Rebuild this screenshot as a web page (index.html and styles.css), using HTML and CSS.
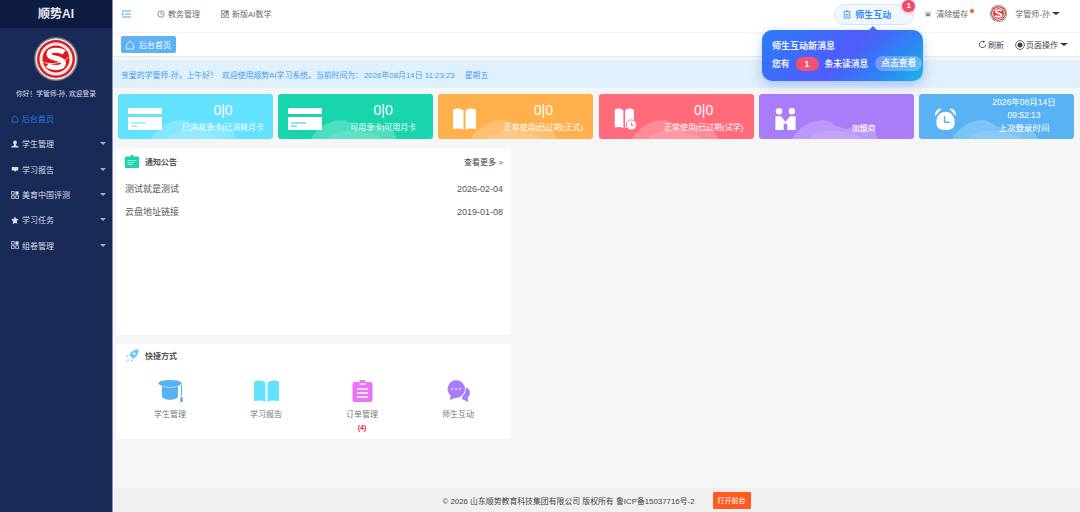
FILE: index.html
```html
<!DOCTYPE html>
<html>
<head>
    <title>顺势AI</title>
    <link rel="stylesheet" href="styles.css">
</head>
<body>

<svg class="defs" width="0" height="0">
  <symbol id="i-card" viewBox="0 0 34 22">
    <rect x="0" y="0" width="34" height="6" rx="1" fill="#fff"/>
    <path d="M0 9h34v12a1 1 0 0 1-1 1H1a1 1 0 0 1-1-1z" fill="#fff"/>
  </symbol>
  <symbol id="i-book" viewBox="0 0 24 24" preserveAspectRatio="none">
    <path d="M0 2c4-2 8-2 11 1v21c-3-2-7-2-10-1a1 1 0 0 1-1-1zM24 2c-4-2-8-2-11 1v21c3-2 7-2 10-1a1 1 0 0 0 1-1z" fill="currentColor"/>
  </symbol>
  <symbol id="i-cloud" viewBox="0 0 90 20">
    <path d="M0 20C4 12 12 6 20 3c8-3 15-3 21 2 4 3 9 4 15 5 6-4 14-5 20-2 6 3 8 7 10 12z" fill="#fff" fill-opacity=".22"/>
    <path d="M16 20c6-7 16-9 26-8 8 1 20 2 30 8z" fill="#fff" fill-opacity=".12"/>
  </symbol>
  <symbol id="i-grid" viewBox="0 0 10 10">
    <path d="M.5.5h3.600v3.600H.5zM.5 5.900h3.600v3.600H.5zM5.900 5.900h3.600v3.600H5.900z" fill="none" stroke="currentColor"/>
    <rect x="5.500" y=".5" width="4" height="4" fill="currentColor"/>
  </symbol>
  <symbol id="i-logo" viewBox="0 0 44 44">
    <circle cx="22" cy="22" r="22" fill="#6f7a8e"/>
    <circle cx="22" cy="22" r="20.500" fill="#f4f1ec"/>
    <circle cx="22" cy="22" r="19" fill="#dc1f24"/>
    <circle cx="22" cy="22" r="16.500" fill="#f8ece6"/>
    <circle cx="22" cy="22" r="13.500" fill="#dc1a20"/>
    <path d="M9 25c6 3 20 2 27-6" fill="none" stroke="#f8ece6" stroke-width=".8"/>
    <path d="M30 15.500C27 13 15.500 11.500 15 17c-.5 5 15 3.500 14.500 9.500C29 32 17 31 13.500 28" fill="none" stroke="#fff" stroke-width="5"/>
  </symbol>
</svg>

<div class="layout">
  <aside class="sidebar">
    <div class="brand">顺势AI</div>
    <div class="profile">
      <svg class="profile-logo"><use href="#i-logo"/></svg>
      <p class="hello">你好！学管师-孙, 欢迎登录</p>
    </div>
    <ul class="menu">
      <li class="menu-item active">
        <svg class="menu-icon" viewBox="0 0 10 10"><path d="M1.500 4.500L5 1l3.500 3.500v4.500h-7z" fill="none" stroke="currentColor"/></svg>
        <span>后台首页</span>
      </li>
      <li class="menu-item">
        <svg class="menu-icon" viewBox="0 0 10 10"><circle cx="5" cy="3" r="2.300" fill="currentColor"/><path d="M4 5h2l.5 2 3 1v1.500H.5V8l3-1z" fill="currentColor"/></svg>
        <span>学生管理</span><i class="caret"></i>
      </li>
      <li class="menu-item">
        <svg class="menu-icon" viewBox="0 0 10 10"><path d="M1 2.500h8v4.500H6.500L5 8.500 3.500 7H1z" fill="currentColor"/></svg>
        <span>学习报告</span><i class="caret"></i>
      </li>
      <li class="menu-item">
        <svg class="menu-icon"><use href="#i-grid"/></svg>
        <span>美育中国评测</span><i class="caret"></i>
      </li>
      <li class="menu-item">
        <svg class="menu-icon" viewBox="0 0 10 10"><path d="M5 .6l1.400 2.900 3.200.4-2.300 2.200.6 3.200L5 8.800l-2.900 1.500.6-3.200L.4 3.900l3.200-.4z" fill="currentColor"/></svg>
        <span>学习任务</span><i class="caret"></i>
      </li>
      <li class="menu-item">
        <svg class="menu-icon"><use href="#i-grid"/></svg>
        <span>组卷管理</span><i class="caret"></i>
      </li>
    </ul>
  </aside>

  <div class="main">
    <header class="topbar">
      <svg class="hamburger" viewBox="0 0 10 8"><path d="M0 .6h10M3.500 4h6.500M0 7.400h10" stroke="#4da3f5" stroke-width="1.200" fill="none"/><path d="M0 2.300L2.300 4 0 5.700z" fill="#4da3f5"/></svg>
      <a class="top-link top-link-first">
        <svg class="top-icon" viewBox="0 0 10 10"><circle cx="5" cy="5" r="4" fill="none" stroke="currentColor"/><path d="M5 2.500V5l1.800 1" fill="none" stroke="currentColor"/></svg>
        教务管理
      </a>
      <a class="top-link">
        <svg class="top-icon"><use href="#i-grid"/></svg>
        新版AI数学
      </a>
      <div class="top-right">
        <div class="chat-pill">
          <svg class="pill-icon" viewBox="0 0 10 10"><path d="M1.500 1.500h7v8h-7zM3.500 1V.5h3V1M3 5h4M3 7h4" fill="none" stroke="currentColor"/></svg>
          师生互动
          <span class="pill-badge">1</span>
        </div>
        <a class="top-link clear-cache">
          <svg class="trash" viewBox="0 0 8 8"><path d="M0 2h8v1H0zM1 3.500h6V7H1z" fill="currentColor"/></svg>
          清除缓存<i class="dot"></i>
        </a>
        <svg class="avatar"><use href="#i-logo"/></svg>
        <a class="top-link user">学管师-孙<i class="caret dark"></i></a>
      </div>
    </header>

    <div class="tabbar">
      <div class="tab-home">
        <svg class="tab-home-icon" viewBox="0 0 10 10"><path d="M1.500 4.500L5 1l3.500 3.500v4.500h-7z" fill="none" stroke="currentColor" stroke-width=".8"/></svg>
        后台首页
      </div>
      <div class="tab-actions">
        <span class="tab-action">
          <svg class="tab-icon" viewBox="0 0 10 10"><path d="M8.500 5A3.500 3.500 0 1 1 6.800 2" fill="none" stroke="currentColor"/><path d="M6 .5l2 1.700-2.300.8z" fill="currentColor"/></svg>
          刷新
        </span>
        <span class="tab-action">
          <svg class="tab-icon wide" viewBox="0 0 10 10"><circle cx="5" cy="5" r="4.400" fill="none" stroke="currentColor" stroke-width=".8"/><circle cx="5" cy="5" r="2.500" fill="currentColor"/></svg>
          页面操作<i class="caret dark"></i>
        </span>
      </div>
    </div>

    <div class="welcome">
      <span>亲爱的学管师-孙，上午好！</span>
      <span>欢迎使用顺势AI学习系统。当前时间为：</span>
      <span>2026年08月14日 11:23:23</span>
      <span>星期五</span>
    </div>

    <section class="stats">
      <div class="stat stat-sky">
        <svg class="stat-icon"><use href="#i-card"/><path d="M3 15h15M3 18h6" stroke="#62e2ff"/></svg>
        <svg class="cloud"><use href="#i-cloud"/></svg>
        <div class="stat-text"><b>0|0</b><span>已消耗季卡|已消耗月卡</span></div>
      </div>
      <div class="stat stat-green">
        <svg class="stat-icon"><use href="#i-card"/><path d="M3 15h15M3 18h6" stroke="#19d5ae"/></svg>
        <svg class="cloud"><use href="#i-cloud"/></svg>
        <div class="stat-text"><b>0|0</b><span>可用季卡|可用月卡</span></div>
      </div>
      <div class="stat stat-orange">
        <svg class="stat-icon book"><use href="#i-book"/></svg>
        <svg class="cloud"><use href="#i-cloud"/></svg>
        <div class="stat-text"><b>0|0</b><span>正常使用|已过期(正式)</span></div>
      </div>
      <div class="stat stat-red">
        <svg class="stat-icon book" viewBox="0 0 26 26">
          <use href="#i-book" width="23" height="24"/>
          <circle cx="20" cy="20" r="6" fill="#fff" stroke="#ff6b7a" stroke-width="1"/>
          <path d="M20 17v3.500h3" fill="none" stroke="#ff6b7a" stroke-width="1.200"/>
        </svg>
        <svg class="cloud"><use href="#i-cloud"/></svg>
        <div class="stat-text"><b>0|0</b><span>正常使用|已过期(试学)</span></div>
      </div>
      <div class="stat stat-purple">
        <svg class="stat-icon book" viewBox="0 0 24 24">
          <circle cx="5" cy="3.500" r="3.500" fill="#fff"/><circle cx="19" cy="3.500" r="3.500" fill="#fff"/>
          <path d="M1 9h6l5 6 5-6h6v15h-9v-6l-2-1.500L10 18v6H1z" fill="#fff"/>
        </svg>
        <svg class="cloud"><use href="#i-cloud"/></svg>
        <div class="stat-text stat-text-low"><span>加盟商</span></div>
      </div>
      <div class="stat stat-blue">
        <svg class="stat-icon book" viewBox="0 0 24 24">
          <path d="M1 8C1 4 3 1 7 1L1 8zM23 8c0-4-2-7-6-7l6 7z" fill="#fff" stroke="#fff"/>
          <path d="M12 4c6 0 10 5 10 11 0 7-3 9-10 9S2 22 2 15C2 9 6 4 12 4z" fill="#fff"/>
          <path d="M11 9v6.500h5.500" fill="none" stroke="#58b2f4" stroke-width="1.600"/>
        </svg>
        <svg class="cloud"><use href="#i-cloud"/></svg>
        <div class="stat-text stat-text-time"><span>2026年08月14日</span><span>09:52:13</span><span>上次登录时间</span></div>
      </div>
    </section>

    <div class="panels">
      <section class="panel panel-notice">
        <div class="panel-head">
          <svg class="panel-icon" viewBox="0 0 14 14"><path d="M7 0l2 3H5z" fill="#19d5ae"/><rect y="2.500" width="14" height="11.500" rx="1" fill="#19d5ae"/><path d="M2.500 6.500h9M2.500 8.500h7M2.500 10.500h5" stroke="#c8f5ea" stroke-width=".8"/></svg>
          <h3 class="panel-title">通知公告</h3>
          <a class="more">查看更多 &gt;</a>
        </div>
        <ul class="notices">
          <li><span>测试就是测试</span><span>2026-02-04</span></li>
          <li><span>云盘地址链接</span><span>2019-01-08</span></li>
        </ul>
      </section>

      <section class="panel panel-quick">
        <div class="panel-head panel-head-quick">
          <svg class="panel-icon" viewBox="0 0 15 15"><path d="M14.500.5c-5 0-8 2-10 6l4 4c4-2 6-5 6-10z" fill="#6cc4fb"/><path d="M4 6L1 7l2 2zM9 11l-1 3-2-2z" fill="#9adbff"/><path d="M3 10l2 2-4 3z" fill="#b7e6ff"/><circle cx="10" cy="5" r="1.300" fill="#fff"/></svg>
          <h3 class="panel-title">快捷方式</h3>
        </div>
        <div class="shortcuts">
          <a class="shortcut">
            <svg class="shortcut-icon" viewBox="0 0 25 22"><path d="M12 0c6 0 11 1 12 3.500C22 6 17 7 12 7S2 6 0 3.500C1 1 6 0 12 0z" fill="#58b2f4"/><path d="M4 6c4 2 12 2 16 0v10c0 5-16 5-16 0z" fill="#58b2f4"/><path d="M23.500 5v11" stroke="#58b2f4"/><path d="M22.500 17h2l.5 4.500c-1 1-2 1-3 0z" fill="#58b2f4"/></svg>
            <span>学生管理</span>
          </a>
          <a class="shortcut">
            <svg class="shortcut-icon book-sky"><use href="#i-book"/></svg>
            <span>学习报告</span>
          </a>
          <a class="shortcut">
            <svg class="shortcut-icon" viewBox="0 0 20 22"><path d="M2 2h5a3 3 0 0 1 6 0h5a2 2 0 0 1 2 2v16a2 2 0 0 1-2 2H2a2 2 0 0 1-2-2V4a2 2 0 0 1 2-2z" fill="#ea74f7"/><path d="M4.500 9h11M4.500 13h11M4.500 17h11" stroke="#fff" stroke-width="1.400"/><path d="M7 3h6v2H7z" fill="#fff" fill-opacity=".7"/></svg>
            <span>订单管理</span>
            <em class="count">(4)</em>
          </a>
          <a class="shortcut">
            <svg class="shortcut-icon" viewBox="0 0 23 22"><path d="M16 7c5 0 7 3 7 6 0 2-1 3-2 4l0 5-6-3z" fill="#a97cf8"/><circle cx="9" cy="9" r="9.800" fill="#fff"/><path d="M9 0a9 9 0 0 1 0 18l-1 0-5 2 .5-4.500A9 9 0 0 1 9 0z" fill="#a97cf8"/><path d="M4.500 9H6M8.300 9h1.500M12 9h1.500" stroke="#fff" stroke-width="1.500"/></svg>
            <span>师生互动</span>
          </a>
        </div>
      </section>
    </div>

    <footer class="footer">
      <span>© 2026 山东顺势教育科技集团有限公司 版权所有 鲁ICP备15037716号-2</span>
      <a class="open-front">打开前台</a>
    </footer>

    <div class="popover">
      <h4 class="popover-title">师生互动新消息</h4>
      <div class="popover-row">
        <span>您有</span>
        <b class="popover-count">1</b>
        <span>条未读消息</span>
        <a class="popover-btn">点击查看</a>
      </div>
    </div>
  </div>
</div>

</body>
</html>
```

FILE: styles.css
```css
* {
    box-sizing: border-box;
}

html, body {
    height: 100%;
}

body {
    margin: 0;
    overflow: hidden;
    background-color: #f6f6f6;
    font-family: "Liberation Sans", "Noto Sans CJK SC", sans-serif;
    font-size: 8px;
    color: #666;
}

ul {
    margin: 0;
    padding: 0;
    list-style: none;
}

.defs {
    position: absolute;
}

.layout {
    display: flex;
    height: 512px;
}

/* Sidebar */
.sidebar {
    width: 113px;
    flex-shrink: 0;
    background-color: #1a2a56;
    border-right: 1px solid #8c93b4;
    color: #d9dde8;
}

.brand {
    height: 28px;
    line-height: 28px;
    text-align: center;
    background-color: #0f1c42;
    color: #e6e9f0;
    font-size: 12px;
    font-weight: bold;
}

.profile {
    padding-top: 9px;
    text-align: center;
}

.profile-logo {
    display: block;
    width: 44px;
    height: 44px;
    margin: 0 auto;
}

.hello {
    margin: 7px 0 0;
    font-size: 6.750px;
    line-height: 11px;
}

.menu {
    margin-top: 7px;
}

.menu-item {
    display: flex;
    align-items: center;
    height: 25.300px;
    padding: 0 6px 0 11px;
}

.menu-item.active {
    color: #1f7fe8;
}

.menu-icon {
    width: 8px;
    height: 8px;
    margin-right: 3px;
    flex-shrink: 0;
}

.caret {
    width: 0;
    height: 0;
    margin-left: auto;
    border: 3px solid transparent;
    border-top: 3px solid #a9afc2;
    border-bottom: 0;
}

.caret.dark {
    margin-left: 2px;
    border-width: 3px 4px 0;
    border-top-color: #333;
}

/* Main column */
.main {
    position: relative;
    flex: 1;
    min-width: 0;
    display: flex;
    flex-direction: column;
}

.topbar {
    display: flex;
    align-items: center;
    height: 33px;
    padding: 0 20px 5px 9px;
    background-color: #fff;
    border-bottom: 1px solid #f5f5f5;
}

.hamburger {
    width: 9px;
    height: 8px;
}

.top-link {
    display: flex;
    align-items: center;
    margin-left: 21px;
    color: #6b6b6b;
    white-space: nowrap;
}

.top-link-first {
    margin-left: 26px;
}

.top-icon {
    width: 8px;
    height: 8px;
    margin-right: 3px;
    color: #777;
}

.top-right {
    display: flex;
    align-items: center;
    margin-left: auto;
}

.chat-pill {
    position: relative;
    display: flex;
    align-items: center;
    width: 80px;
    height: 21px;
    margin-top: 1px;
    padding-left: 8px;
    border: 1px solid #d6e8fa;
    border-radius: 11px;
    background-color: #f0f7fe;
    color: #2f8fef;
    font-size: 9px;
    font-weight: bold;
}

.pill-icon {
    width: 8px;
    height: 9px;
    margin-right: 4px;
}

.pill-badge {
    position: absolute;
    top: -5px;
    right: -2px;
    width: 13px;
    height: 12px;
    line-height: 12px;
    border-radius: 6px;
    background-color: #f6486c;
    color: #fff;
    font-size: 8px;
    text-align: center;
    box-shadow: 0 1px 3px rgba(246, 72, 108, .5);
}

.clear-cache {
    margin-left: 11px;
}

.trash {
    width: 6px;
    height: 6px;
    margin-right: 5px;
    color: #888;
}

.dot {
    width: 4px;
    height: 4px;
    margin: -6px 0 0 2px;
    border-radius: 50%;
    background-color: #ff5a1f;
}

.avatar {
    width: 17px;
    height: 17px;
    margin-left: 16px;
}

.user {
    margin-left: 8px;
}

.tabbar {
    display: flex;
    align-items: center;
    justify-content: space-between;
    height: 24px;
    padding: 0 12px 0 8px;
    background-color: #fff;
    border-bottom: 1px solid #e8e8e8;
}

.tab-home {
    display: flex;
    align-items: center;
    width: 55px;
    height: 17px;
    padding-left: 4px;
    border-radius: 2px;
    background-color: #5cb2f5;
    color: #fff;
}

.tab-home-icon {
    width: 10px;
    height: 10px;
    margin-right: 4px;
}

.tab-actions {
    display: flex;
    align-items: center;
    gap: 11px;
}

.tab-action {
    display: flex;
    align-items: center;
    color: #444;
}

.tab-icon {
    width: 9px;
    height: 9px;
    margin-right: 1px;
}

.tab-icon.wide {
    width: 10px;
    height: 10px;
}

.welcome {
    display: flex;
    align-items: center;
    height: 28px;
    margin-top: 3px;
    padding-left: 8px;
    background-color: #e1f0fd;
    color: #3f9cf1;
    font-size: 7.875px;
}

.welcome span:nth-child(2) {
    margin-left: 4px;
}

.welcome span:nth-child(3) {
    margin-left: 1px;
}

.welcome span:nth-child(4) {
    margin-left: 10px;
}

/* Stat cards */
.stats {
    display: grid;
    grid-template-columns: repeat(6, 1fr);
    gap: 5.200px;
    height: 45px;
    margin-top: 6px;
    padding: 0 6px 0 5px;
}

.stat {
    position: relative;
    display: flex;
    overflow: hidden;
    border-radius: 3px;
    color: #fff;
}

.stat-sky { background-color: #62e2ff; }
.stat-green { background-color: #19d5ae; }
.stat-orange { background-color: #ffb04a; }
.stat-red { background-color: #ff6b7a; }
.stat-purple { background-color: #a97cf8; }
.stat-blue { background-color: #58b2f4; }

.stat-icon {
    flex-shrink: 0;
    width: 34px;
    height: 22px;
    margin: 14px 0 0 10px;
}

.stat-icon.book {
    width: 23px;
    height: 22px;
    margin: 14px 6px 0 15px;
}

.cloud {
    position: absolute;
    left: 33px;
    bottom: 0;
    width: 90px;
    height: 20px;
}

.stat-text {
    position: relative;
    flex: 1;
    display: flex;
    flex-direction: column;
    align-items: center;
    padding: 6px 0 0 11px;
    line-height: 12px;
}

.stat-text b {
    font-size: 14px;
    line-height: 20px;
    font-weight: normal;
}

.stat-text span {
    white-space: nowrap;
    margin-top: 2px;
}

.stat-text-low {
    padding-top: 27px;
}

.stat-text-time {
    padding-top: 2px;
    font-size: 8.500px;
}

.stat-text-time span {
    margin-top: 0;
    line-height: 13px;
}

/* Panels */
.panels {
    flex: 1;
    display: flex;
    flex-direction: column;
    gap: 9px;
    padding: 10px 0 0 3px;
}

.panel {
    width: 395px;
    border-radius: 4px;
    background-color: #fff;
}

.panel-notice {
    height: 186px;
}

.panel-quick {
    height: 95px;
}

.panel-head {
    display: flex;
    align-items: center;
    height: 24px;
    padding: 0 8px 0 9px;
}

.panel-head-quick {
    height: 23px;
}

.panel-icon {
    width: 14px;
    height: 14px;
    margin-right: 6px;
}

.panel-title {
    margin: 0;
    font-size: 8px;
    font-weight: bold;
    color: #555;
}

.more {
    margin-left: auto;
    color: #444;
}

.notices {
    padding: 4px 8px 0 9px;
    font-size: 9px;
    color: #555;
}

.notices li {
    display: flex;
    justify-content: space-between;
    align-items: center;
    height: 23px;
}

.shortcuts {
    display: grid;
    grid-template-columns: repeat(4, 96px);
    padding: 13px 0 0 6px;
}

.shortcut {
    display: flex;
    flex-direction: column;
    align-items: center;
    color: #777;
}

.shortcut-icon {
    width: 25px;
    height: 22px;
    margin-bottom: 6px;
}

.count {
    margin-top: 5px;
    font-style: normal;
    font-size: 7px;
    font-weight: bold;
    color: #e8202a;
}

.book-sky {
    color: #62e2ff;
}

/* Footer */
.footer {
    display: flex;
    align-items: center;
    justify-content: center;
    gap: 18px;
    height: 24px;
    background-color: #f0f0f0;
    color: #444;
    font-size: 7.875px;
}

.open-front {
    display: block;
    width: 38px;
    height: 17px;
    line-height: 17px;
    border-radius: 1px;
    background-color: #ff5a1f;
    color: #fff;
    font-size: 7px;
    text-align: center;
}

/* Popover over the header */
.popover {
    position: absolute;
    top: 30px;
    left: 649px;
    width: 161px;
    height: 51px;
    padding: 10px 0 0 10px;
    border-radius: 10px;
    background: linear-gradient(135deg, #2a7df8 0%, #4f5cfb 50%, #2f80f4 75%, #1bb8e6 100%);
    box-shadow: 0 4px 12px rgba(60, 110, 240, .35);
    color: #eef3ff;
}

.popover::before {
    content: "";
    position: absolute;
    top: -4px;
    left: 107px;
    border: 4px solid transparent;
    border-top: 0;
    border-bottom-color: #3a72f8;
}

.popover-title {
    margin: 0;
    font-size: 9px;
    line-height: 12px;
    font-weight: bold;
}

.popover-row {
    display: flex;
    align-items: center;
    margin-top: 4px;
    font-size: 8.750px;
    font-weight: bold;
    white-space: nowrap;
}

.popover-count {
    width: 23px;
    height: 14px;
    line-height: 14px;
    margin: 0 6px;
    border-radius: 7px;
    background: linear-gradient(90deg, #ff4c6a, #f0527a);
    color: #fff;
    text-align: center;
}

.popover-btn {
    width: 47px;
    height: 15px;
    line-height: 15px;
    margin-left: 7px;
    border-radius: 8px;
    background-color: rgba(255, 255, 255, .28);
    text-align: center;
}
```
